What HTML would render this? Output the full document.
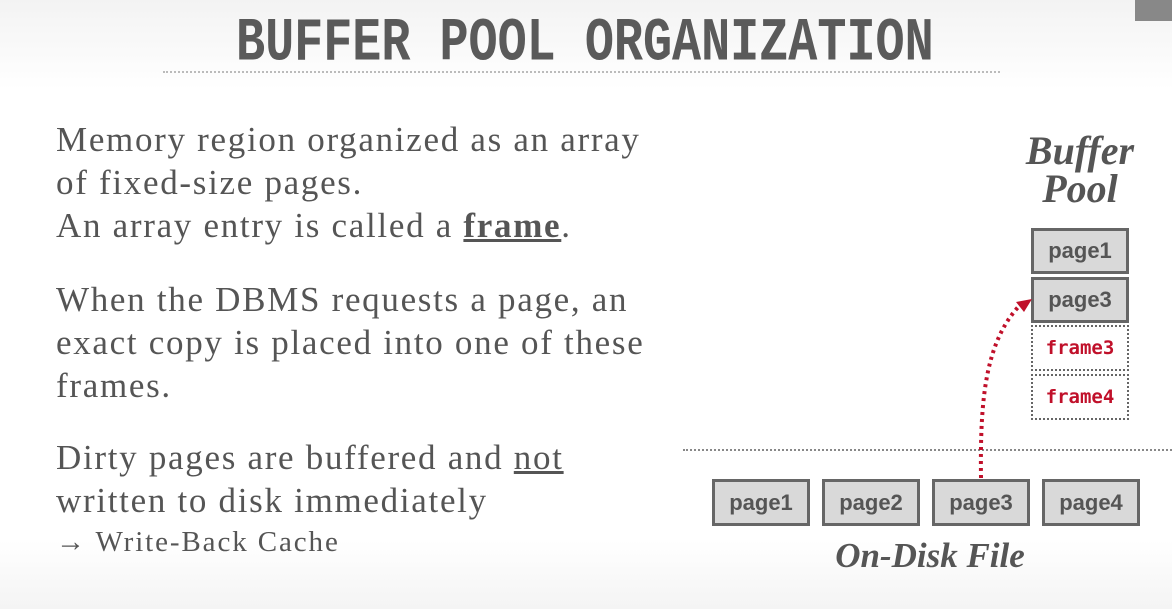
<html><head><style>
body{margin:0;width:1172px;height:609px;overflow:hidden;background:linear-gradient(#f3f3f3 0,#fff 90px,#fff 540px,#f4f4f4 609px);position:relative;font-family:"Liberation Serif",serif;color:#555}
.t{position:absolute;left:236px;top:8px;font-family:"Liberation Mono",monospace;font-weight:bold;font-size:56px;color:#5a5a5a;transform:scale(0.865,1.1);transform-origin:left top;white-space:nowrap}
.hl{position:absolute;left:163px;top:71px;width:837px;border-top:2px dotted #bbb}
.p{position:absolute;left:56px;font-size:35px;letter-spacing:1.7px;line-height:43px;color:#555;white-space:nowrap}
.b{position:absolute;box-sizing:border-box;background:#d9d9d9;border:3px solid #666;font-family:"Liberation Sans",sans-serif;font-weight:bold;font-size:22px;color:#555;text-align:center}
.f{position:absolute;box-sizing:border-box;border:2px dotted #666;font-family:"DejaVu Sans Mono",monospace;font-weight:bold;font-size:19px;color:#c0102a;text-align:center;background:#fff}
.i{position:absolute;font-style:italic;font-weight:bold;font-size:40px;color:#555;text-align:center}
</style></head><body>
<div class="t">BUFFER POOL ORGANIZATION</div>
<div class="hl"></div>
<div style="position:absolute;left:1135px;top:0;width:37px;height:21px;background:#888"></div>
<div class="p" style="top:118px">Memory region organized as an array<br>of fixed-size pages.<br>An array entry is called a <b style="text-decoration:underline">frame</b>.</div>
<div class="p" style="top:278px">When the DBMS requests a page, an<br>exact copy is placed into one of these<br>frames.</div>
<div class="p" style="top:436px">Dirty pages are buffered and <u>not</u><br>written to disk immediately</div>
<div class="p" style="top:521px;font-size:29px;letter-spacing:1.9px">→ Write-Back Cache</div>
<div class="i" style="left:1010px;top:132px;width:140px;line-height:38px">Buffer<br>Pool</div>
<div class="b" style="left:1031px;top:228px;width:98px;height:46px;line-height:40px">page1</div>
<div class="b" style="left:1031px;top:277px;width:98px;height:46px;line-height:40px">page3</div>
<div class="f" style="left:1031px;top:325px;width:98px;height:46px;line-height:42px">frame3</div>
<div class="f" style="left:1031px;top:374px;width:98px;height:46px;line-height:42px">frame4</div>
<div style="position:absolute;left:683px;top:449px;width:489px;border-top:2px dotted #888"></div>
<div class="b" style="left:712px;top:479px;width:98px;height:47px;line-height:41px">page1</div>
<div class="b" style="left:822px;top:479px;width:98px;height:47px;line-height:41px">page2</div>
<div class="b" style="left:932px;top:479px;width:98px;height:47px;line-height:41px">page3</div>
<div class="b" style="left:1042px;top:479px;width:98px;height:47px;line-height:41px">page4</div>
<svg style="position:absolute;left:0;top:0" width="1172" height="609"><path d="M981 478 C980 400 985 340 1022 303" fill="none" stroke="#c0102a" stroke-width="4" stroke-dasharray="3 4"/><path d="M1032 299 L1016 302 L1024 312 Z" fill="#c0102a"/></svg>
<div class="i" style="left:790px;top:536px;width:280px;font-size:35px">On-Disk File</div>
</body></html>
